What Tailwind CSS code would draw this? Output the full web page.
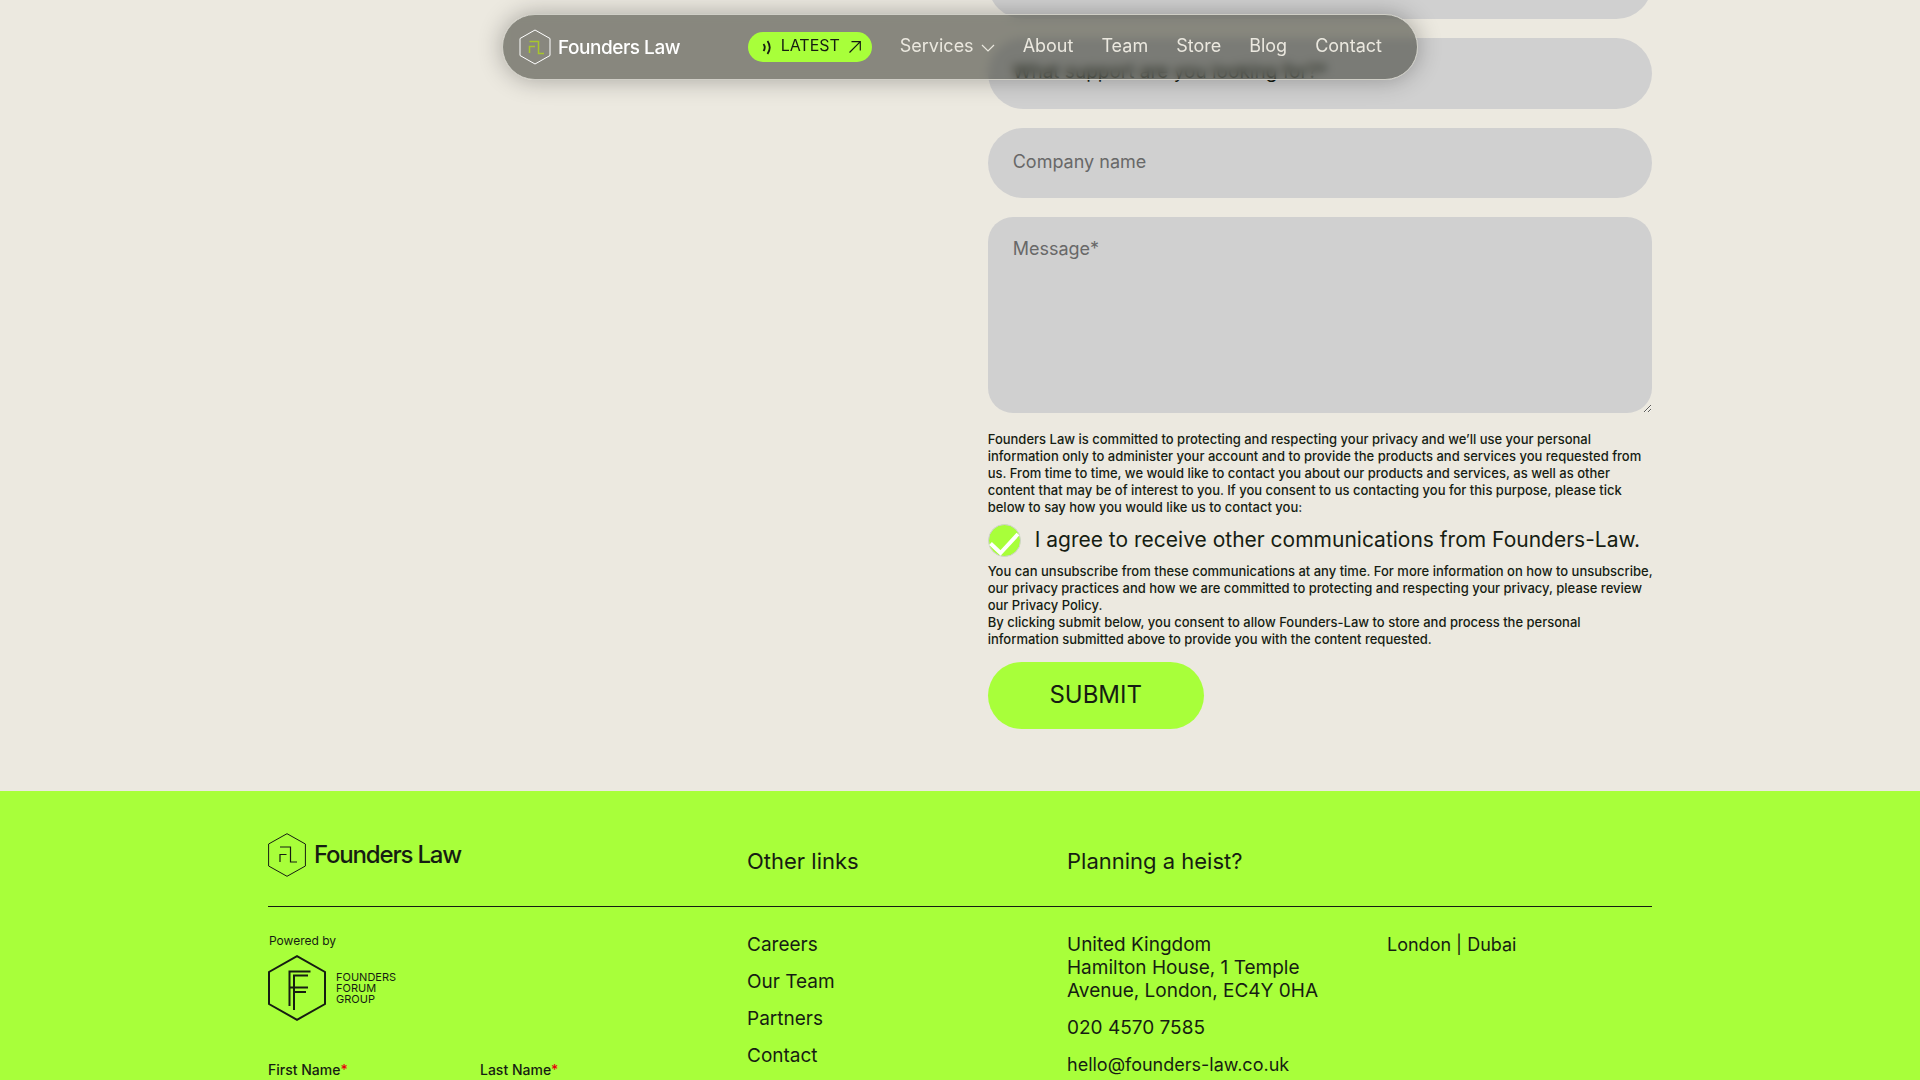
<!DOCTYPE html>
<html lang="en">
<head>
  <meta charset="UTF-8" />
  <meta name="viewport" content="width=device-width, initial-scale=1.0" />
  <title>Contact | Founders Law</title>
  <script src="https://cdn.jsdelivr.net/npm/@tailwindcss/browser@4"></script>
</head>
<body class="h-screen overflow-hidden bg-[#ece9e0] font-['Inter',sans-serif] text-[#161d12]">

  <!-- Floating navigation -->
  <header class="fixed inset-x-0 top-[14px] z-10 flex justify-center">
    <nav class="flex h-[66px] w-[916px] items-center justify-between rounded-full border border-[#cfcec6] bg-[#24261c]/50 pl-4 pr-[35px] text-[18px] text-[#ebe8df] shadow-[0_0_24px_rgba(0,0,0,0.3)] backdrop-blur-[5px]">
      <a href="#" class="flex items-center gap-[7px] text-white">
        <svg class="h-9 w-8" viewBox="0 0 32 36" fill="none">
          <path d="M16 1 31 9.500V26.500L16 35 1 26.500V9.500Z" stroke="currentColor" />
          <path d="M10.500 24V17.500H16M10.500 12.500H19.500V24.500H25" stroke="#a8c62c" stroke-width="1.500" />
        </svg>
        <span class="pt-[2px] text-[19px] font-medium tracking-tight">Founders Law</span>
      </a>
      <div class="flex items-center gap-7 pb-[3px]">
        <a href="#" class="mt-[3px] flex h-[30px] w-[124px] items-center justify-between rounded-full bg-[#a8ff3a] pl-[14px] pr-[11px] text-base text-[#161d12]">
          <svg class="h-4 w-[10px]" viewBox="0 0 10 16" fill="none" stroke="currentColor" stroke-width="1.800">
            <path d="M1.500 5Q4 8.500 1.500 12M5.500 2Q10 8.500 5.500 15" />
          </svg>
          <span class="pb-1">LATEST</span>
          <svg class="size-3" viewBox="0 0 12 12" fill="none" stroke="currentColor" stroke-width="1.200">
            <path d="M.5 11.500 11.300.7M2.500.7H11.300V9.500" />
          </svg>
        </a>
        <a href="#" class="flex items-center gap-[7px]">Services
          <svg class="mt-1 h-2 w-[14px]" viewBox="0 0 14 8" fill="none" stroke="currentColor" stroke-width="1.200"><path d="M1 1 7 7 13 1" /></svg>
        </a>
        <a href="#">About</a>
        <a href="#">Team</a>
        <a href="#">Store</a>
        <a href="#">Blog</a>
        <a href="#">Contact</a>
      </div>
    </nav>
  </header>

  <!-- Contact form, scrolled part way under the nav -->
  <main class="mx-auto -mt-[52px] max-w-[1384px] pb-[62px]">
    <form class="ml-auto w-[48%]">
      <div class="flex flex-col gap-[19px] text-[18px]">
        <input type="tel" aria-label="Phone number" class="h-[71px] w-full rounded-full bg-[#d0d0d0] px-[25px]" />
        <select aria-label="What support are you looking for?" class="h-[71px] w-full appearance-none rounded-full bg-[#d0d0d0] px-[25px] pb-[2px] text-[19px]">
          <option>What support are you looking for?*</option>
        </select>
        <input type="text" aria-label="Company name" placeholder="Company name" class="h-[70px] w-full rounded-full bg-[#d0d0d0] px-[25px] pb-1 placeholder:text-[#686868]" />
        <textarea aria-label="Message" placeholder="Message*" class="block h-[196px] w-full rounded-[25px] bg-[#d0d0d0] px-[25px] py-[18px] placeholder:text-[#686868]"></textarea>
      </div>

      <p class="mt-[18px] whitespace-nowrap text-[13px] font-medium leading-[17px]">Founders Law is committed to protecting and respecting your privacy and we’ll use your personal<br />information only to administer your account and to provide the products and services you requested from<br />us. From time to time, we would like to contact you about our products and services, as well as other<br />content that may be of interest to you. If you consent to us contacting you for this purpose, please tick<br />below to say how you would like us to contact you:</p>

      <label class="mt-2 flex h-[33px] items-center gap-[14px] text-[21px]">
        <span class="relative block size-[33px] shrink-0">
          <input type="checkbox" checked class="peer size-full appearance-none rounded-full border border-[#d0d0d0] bg-white checked:bg-[#a8ff3a]" />
          <svg class="pointer-events-none absolute inset-0 hidden size-full peer-checked:block" viewBox="0 0 33 33" fill="none" stroke="#fff" stroke-width="4">
            <path d="M2.500 19.500 12.500 29 30 10" />
          </svg>
        </span>
        <span class="whitespace-nowrap pb-[2px]">I agree to receive other communications from Founders-Law.</span>
      </label>

      <p class="mt-[6px] whitespace-nowrap text-[13px] font-medium leading-[17px]">You can unsubscribe from these communications at any time. For more information on how to unsubscribe,<br />our privacy practices and how we are committed to protecting and respecting your privacy, please review<br />our Privacy Policy.<br />By clicking submit below, you consent to allow Founders-Law to store and process the personal<br />information submitted above to provide you with the content requested.</p>

      <button type="submit" class="mt-[14px] h-[67px] w-[216px] rounded-full bg-[#a8ff3a] pb-[2px] text-2xl">SUBMIT</button>
    </form>
  </main>

  <footer class="bg-[#a8ff3a] pt-[41px]">
    <div class="mx-auto max-w-[1384px]">
      <div class="grid grid-cols-[479fr_320fr_585fr] border-b border-[#161d12] pb-7 text-[22px]">
        <a href="#" class="flex items-center gap-2">
          <svg class="h-11 w-[38px]" viewBox="0 0 38 44" fill="none" stroke="currentColor">
            <path d="M19 .7 37.400 11V33L19 43.300.6 33V11Z" />
            <path d="M12 29V21.500H18.500M12 14H22.500V29H29" stroke-width="1.200" />
          </svg>
          <span class="text-[24px] font-medium tracking-tighter">Founders Law</span>
        </a>
        <h2 class="pt-[13px]">Other links</h2>
        <h2 class="pt-[13px]">Planning a heist?</h2>
      </div>

      <div class="grid grid-cols-[479fr_320fr_320fr_265fr] pt-[26px] text-[19px] leading-[23px]">
        <div>
          <p class="pl-px text-xs">Powered by</p>
          <div class="mt-[6px] flex items-center gap-[10px]">
            <svg class="h-[66px] w-[58px]" viewBox="0 0 58 66" fill="none" stroke="currentColor" stroke-width="2">
              <path d="M29 1.200 57 17V49L29 64.800 1 49V17Z" />
              <path d="M21.500 51V16.500H42.500M26 55V20.500H40M22 32.500H40M26 37H38" />
            </svg>
            <span class="text-[11px] leading-[11px]">FOUNDERS<br />FORUM<br />GROUP</span>
          </div>
          <form class="mt-10 grid grid-cols-[212fr_267fr] text-sm font-medium leading-[17px]">
            <label for="first-name">First Name<span class="text-red-600">*</span>
              <input id="first-name" type="text" class="mt-2 block h-10 w-[190px] bg-white" />
            </label>
            <label for="last-name">Last Name<span class="text-red-600">*</span>
              <input id="last-name" type="text" class="mt-2 block h-10 w-[190px] bg-white" />
            </label>
          </form>
        </div>
        <ul class="space-y-[14px]">
          <li><a href="#">Careers</a></li>
          <li><a href="#">Our Team</a></li>
          <li><a href="#">Partners</a></li>
          <li><a href="#">Contact</a></li>
        </ul>
        <address class="space-y-[14px] not-italic">
          <p>United Kingdom<br />Hamilton House, 1 Temple<br />Avenue, London, EC4Y 0HA</p>
          <p><a href="tel:02045707585">020 4570 7585</a></p>
          <p class="text-[18px] leading-[23px]"><a href="mailto:hello@founders-law.co.uk">hello@founders-law.co.uk</a></p>
        </address>
        <p class="text-[18px] leading-[23px]">London | Dubai</p>
      </div>
    </div>
  </footer>
</body>
</html>
